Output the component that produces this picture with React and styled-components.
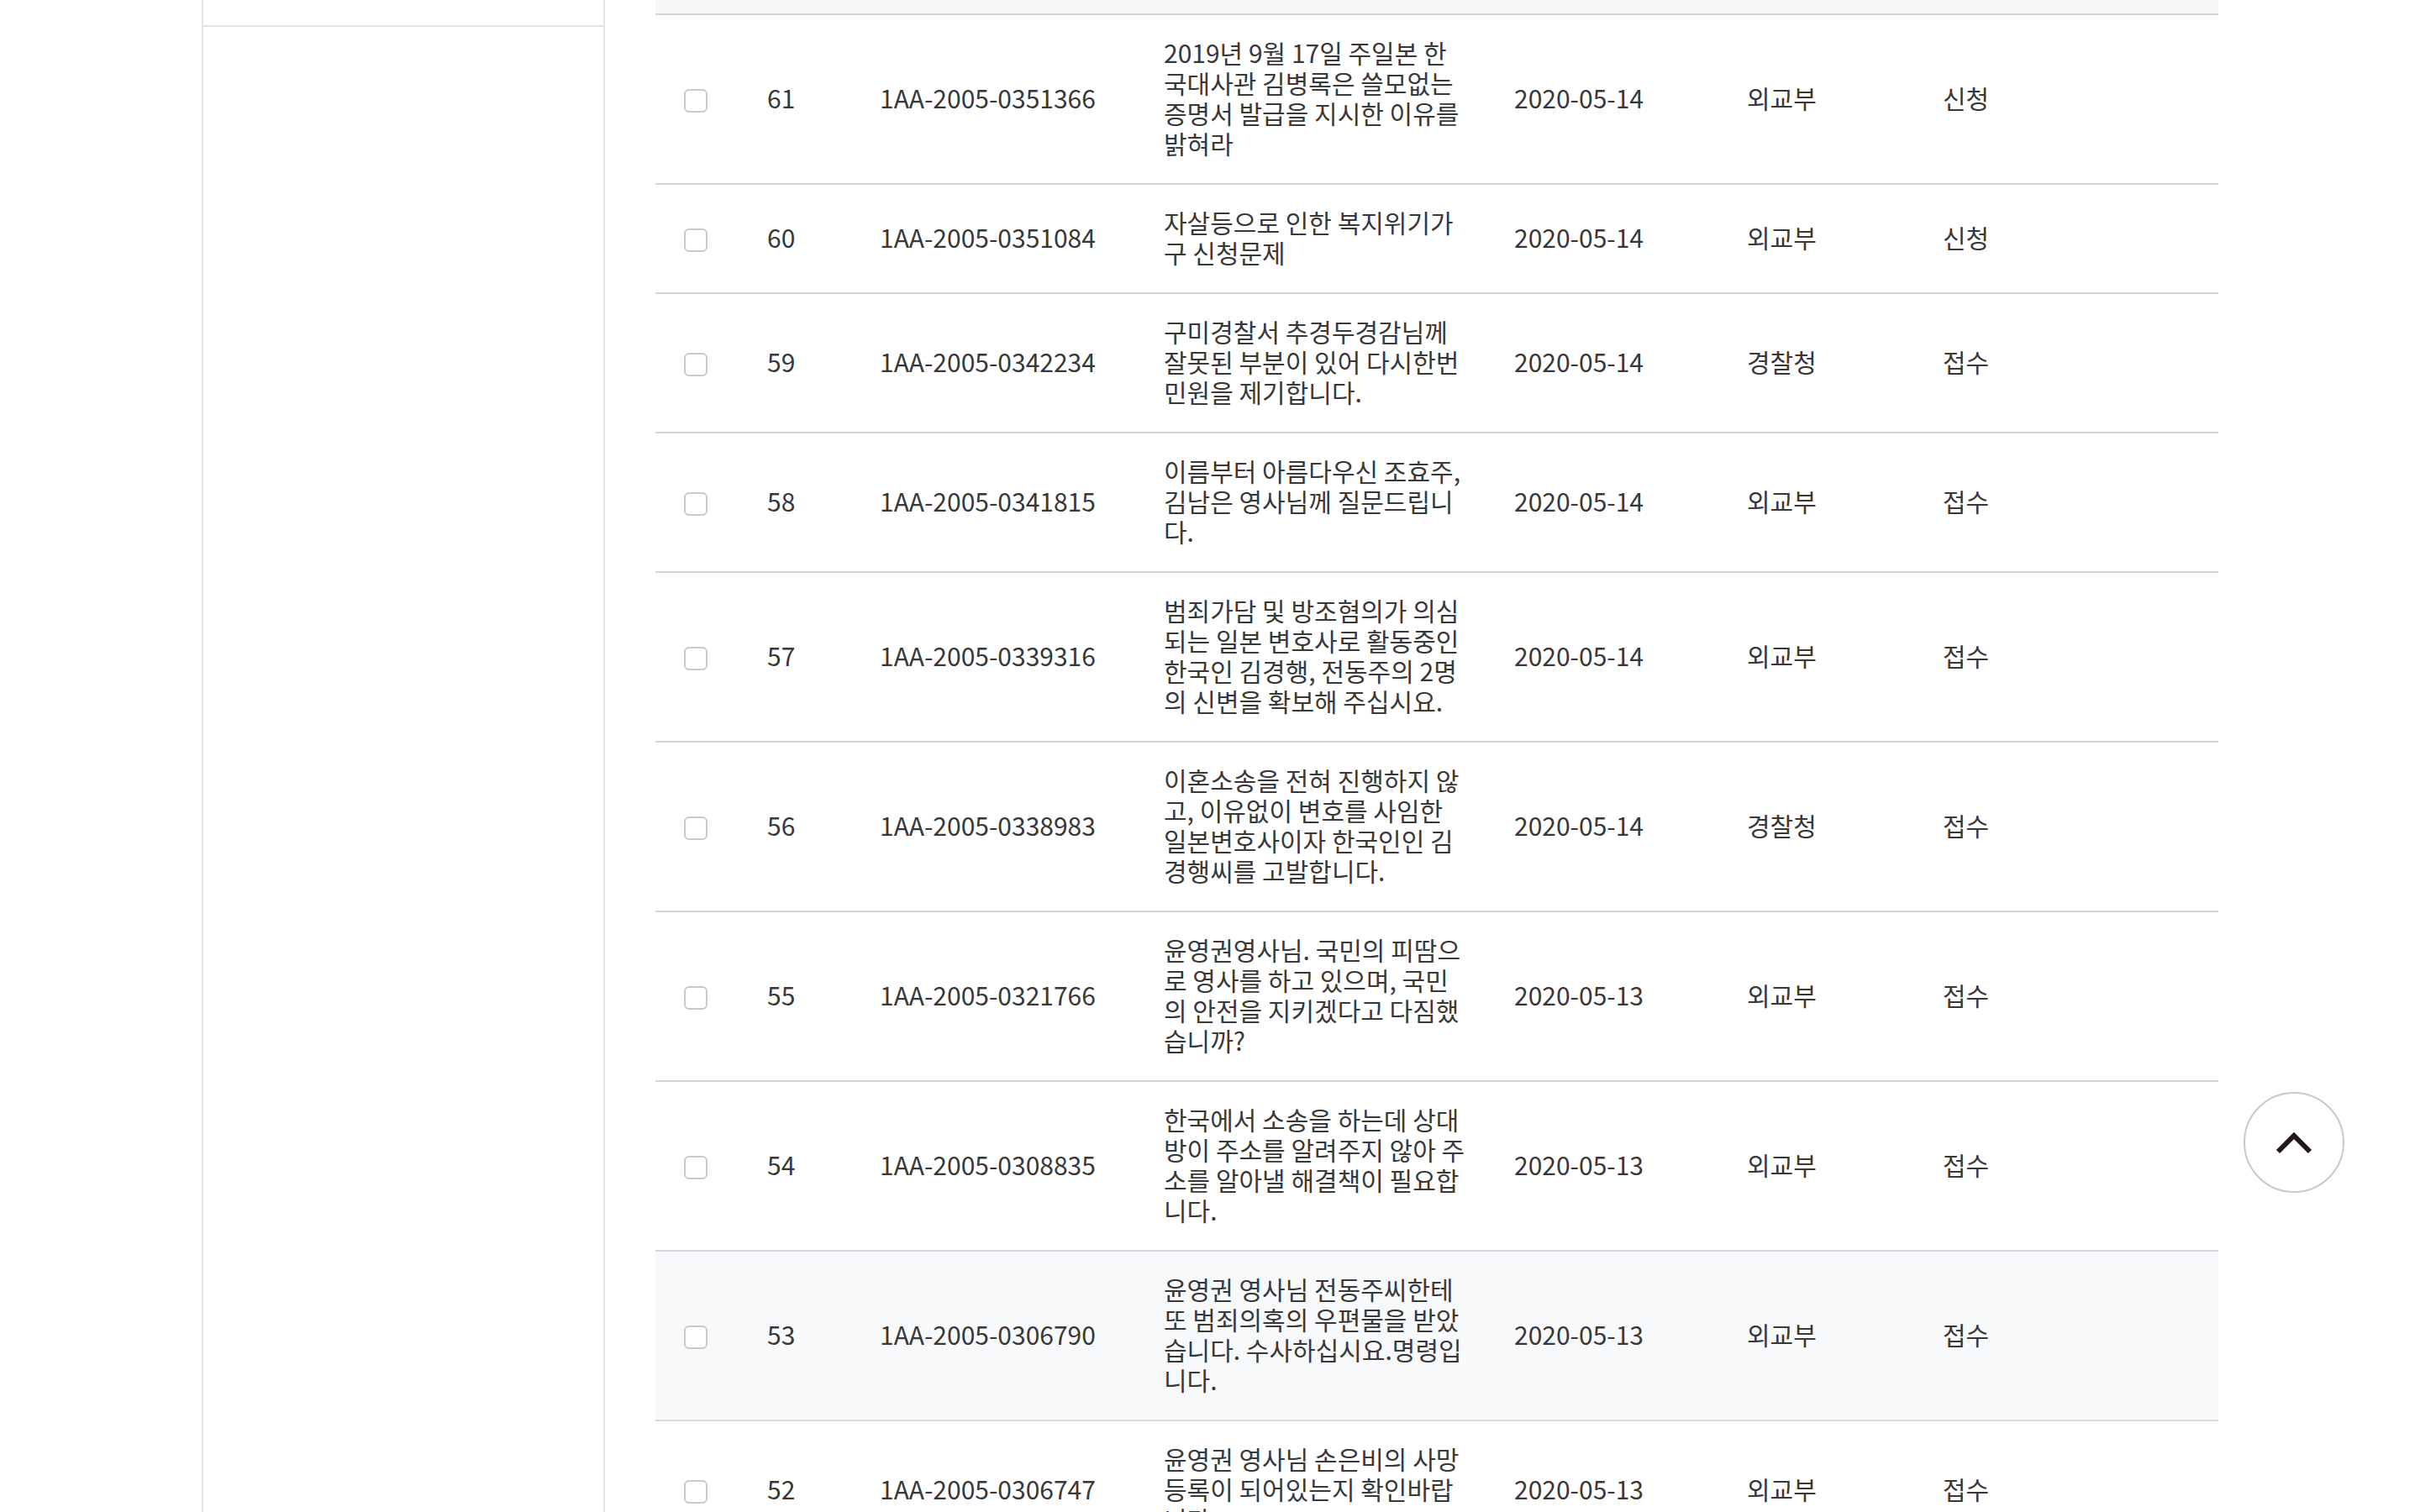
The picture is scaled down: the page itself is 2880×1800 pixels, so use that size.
import React from 'react'
import styled, { createGlobalStyle } from 'styled-components'

const GlobalStyle = createGlobalStyle`
  html, body {
    margin: 0;
    padding: 0;
    background: #fff;
    overflow: hidden;
  }
  body {
    font-family: "Noto Sans CJK KR", "Noto Sans", sans-serif;
    color: #383838;
  }
`

const Page = styled.div`
  display: flex;
  align-items: stretch;
  height: 1800px;
  padding-left: 240px;
`

const Sidebar = styled.aside`
  width: 476px;
  flex-shrink: 0;
  border-left: 2px solid #e2e2e2;
  border-right: 2px solid #e2e2e2;
`

const SidebarTop = styled.div`
  height: 30px;
  border-bottom: 2px solid #e2e2e2;
`

const Main = styled.main`
  width: 1860px;
  margin-left: 60px;
`

const HeadStrip = styled.div`
  height: 16px;
  background: #f7f7f7;
  border-bottom: 2px solid #d6d5db;
`

const Row = styled.div`
  display: grid;
  grid-template-columns: 133px 134px 338px 417px 277px 233px 1fr;
  align-items: center;
  padding: 26px 0 30px;
  border-bottom: 2px solid #d6d5db;
  background: ${props => (props.$active ? '#f8f9fb' : '#fff')};
  font-size: 30px;
  line-height: 36px;
`

const CheckCell = styled.div`
  padding-left: 34px;
  display: flex;
  align-items: center;
  padding-top: 8px;
`

const Box = styled.span`
  width: 24px;
  height: 24px;
  border: 2px solid #c9c9c9;
  border-radius: 6px;
  background: #fff;
`

const Cell = styled.div`
  white-space: nowrap;
`

const Title = styled.div`
  white-space: pre-line;
`

const TopButton = styled.button`
  position: fixed;
  left: 2670px;
  top: 1300px;
  width: 120px;
  height: 120px;
  border-radius: 50%;
  border: 2px solid #c9c9c9;
  background: #fff;
  display: flex;
  align-items: center;
  justify-content: center;
  padding: 0;
  cursor: pointer;
`

const rows = [
  { no: 61, id: '1AA-2005-0351366', title: ['2019년 9월 17일 주일본 한', '국대사관 김병록은 쓸모없는', '증명서 발급을 지시한 이유를', '밝혀라'], date: '2020-05-14', dept: '외교부', status: '신청' },
  { no: 60, id: '1AA-2005-0351084', title: ['자살등으로 인한 복지위기가', '구 신청문제'], date: '2020-05-14', dept: '외교부', status: '신청' },
  { no: 59, id: '1AA-2005-0342234', title: ['구미경찰서 추경두경감님께', '잘못된 부분이 있어 다시한번', '민원을 제기합니다.'], date: '2020-05-14', dept: '경찰청', status: '접수' },
  { no: 58, id: '1AA-2005-0341815', title: ['이름부터 아름다우신 조효주,', '김남은 영사님께 질문드립니', '다.'], date: '2020-05-14', dept: '외교부', status: '접수' },
  { no: 57, id: '1AA-2005-0339316', title: ['범죄가담 및 방조혐의가 의심', '되는 일본 변호사로 활동중인', '한국인 김경행, 전동주의 2명', '의 신변을 확보해 주십시요.'], date: '2020-05-14', dept: '외교부', status: '접수' },
  { no: 56, id: '1AA-2005-0338983', title: ['이혼소송을 전혀 진행하지 않', '고, 이유없이 변호를 사임한', '일본변호사이자 한국인인 김', '경행씨를 고발합니다.'], date: '2020-05-14', dept: '경찰청', status: '접수' },
  { no: 55, id: '1AA-2005-0321766', title: ['윤영권영사님. 국민의 피땀으', '로 영사를 하고 있으며, 국민', '의 안전을 지키겠다고 다짐했', '습니까?'], date: '2020-05-13', dept: '외교부', status: '접수' },
  { no: 54, id: '1AA-2005-0308835', title: ['한국에서 소송을 하는데 상대', '방이 주소를 알려주지 않아 주', '소를 알아낼 해결책이 필요합', '니다.'], date: '2020-05-13', dept: '외교부', status: '접수' },
  { no: 53, id: '1AA-2005-0306790', title: ['윤영권 영사님 전동주씨한테', '또 범죄의혹의 우편물을 받았', '습니다. 수사하십시요.명령입', '니다.'], date: '2020-05-13', dept: '외교부', status: '접수', active: true },
  { no: 52, id: '1AA-2005-0306747', title: ['윤영권 영사님 손은비의 사망', '등록이 되어있는지 확인바랍', '니다.'], date: '2020-05-13', dept: '외교부', status: '접수' },
]

function ListRow({ item }) {
  return (
    <Row $active={item.active}>
      <CheckCell>
        <Box />
      </CheckCell>
      <Cell>{item.no}</Cell>
      <Cell>{item.id}</Cell>
      <Title>{item.title.join('\n')}</Title>
      <Cell>{item.date}</Cell>
      <Cell>{item.dept}</Cell>
      <Cell>{item.status}</Cell>
    </Row>
  )
}

function App() {
  return (
    <>
      <GlobalStyle />
      <Page>
        <Sidebar>
          <SidebarTop />
        </Sidebar>
        <Main>
          <HeadStrip />
          {rows.map(item => <ListRow item={item} key={item.no} />)}
        </Main>
      </Page>
      <TopButton aria-label="맨 위로">
        <svg width="44" height="28" viewBox="0 0 44 28">
          <path d="M3 25 L22 6 L41 25" fill="none" stroke="#231815" strokeWidth="6" />
        </svg>
      </TopButton>
    </>
  )
}

export default App
